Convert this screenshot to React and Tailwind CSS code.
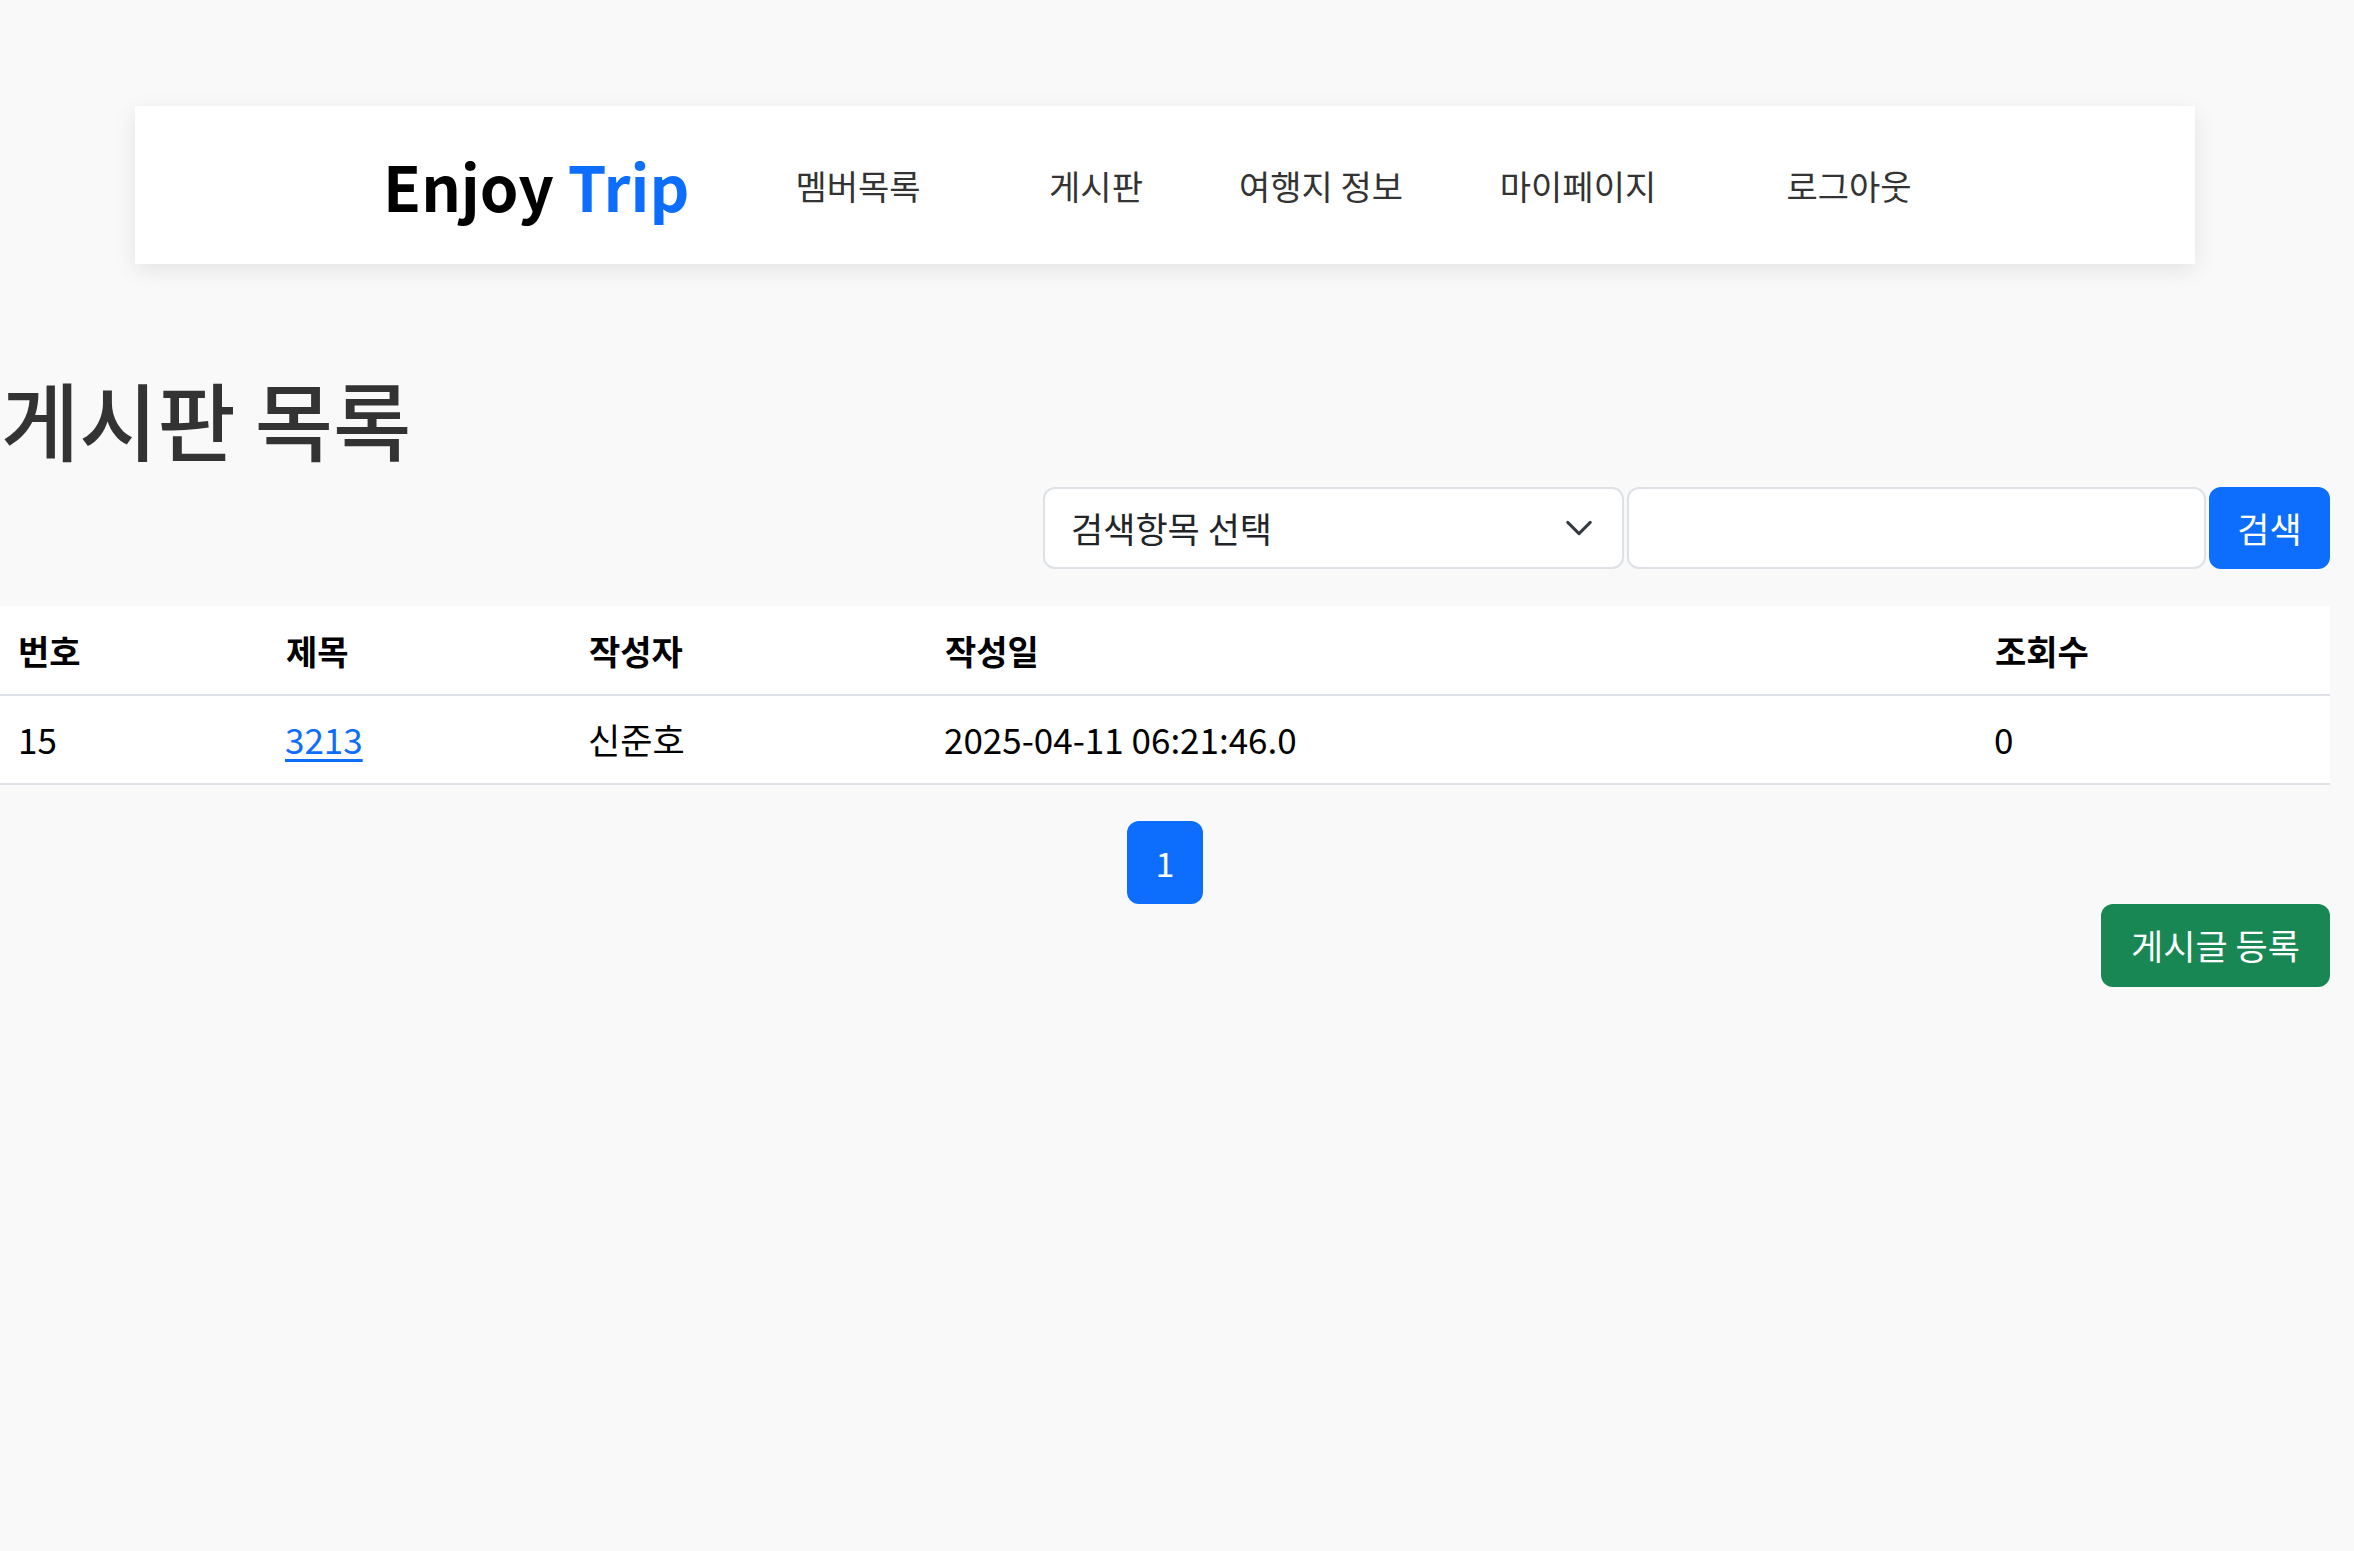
import React from 'react';

const navItems = [
    { label: '멤버목록', w: 'w-[344px]' },
    { label: '게시판', w: 'w-[132px]' },
    { label: '여행지 정보', w: 'w-[318px]' },
    { label: '마이페이지', w: 'w-[196px]' },
    { label: '로그아웃', w: 'w-[346px]' },
];

const rows = [
    { no: 15, title: '3213', writer: '신준호', date: '2025-04-11 06:21:46.0', hit: 0 },
];

const Header = () => (
    <div className="px-[135px] pt-[106px]">
        <div className="flex h-[158px] items-center bg-white pl-[248px] shadow-[0_6px_22px_rgba(0,0,0,0.09)]">
            <a className="w-[303px] whitespace-nowrap text-[62px] font-bold leading-none text-black">
                Enjoy <span className="text-[#0d6efd]">Trip</span>
            </a>
            {navItems.map((item) => (
                <a
                    key={item.label}
                    className={`${item.w} flex justify-center whitespace-nowrap text-[34px] text-[#333]`}
                >
                    {item.label}
                </a>
            ))}
        </div>
    </div>
);

const SearchBar = () => (
    <div className="flex h-[82px] justify-end gap-[3px]">
        <div className="flex w-[581px] items-center justify-between rounded-[12px] border-2 border-[#dee2e6] bg-white pl-[26px] pr-[28px]">
            <span className="text-[35px] text-[#212529]">검색항목 선택</span>
            <svg className="h-[30px] w-[30px]" viewBox="0 0 16 16" fill="none">
                <path
                    d="M2 5l6 6 6-6"
                    stroke="#343a40"
                    strokeWidth="1.6"
                    strokeLinecap="round"
                    strokeLinejoin="round"
                />
            </svg>
        </div>
        <div className="w-[579px] rounded-[12px] border-2 border-[#dee2e6] bg-white" />
        <button className="flex w-[121px] items-center justify-center rounded-[12px] bg-[#0d6efd] text-[35px] text-white">
            검색
        </button>
    </div>
);

const BoardTable = () => (
    <table className="mt-[37px] w-full table-fixed border-collapse bg-white text-[35px] text-black">
        <colgroup>
            <col className="w-[268px]" />
            <col className="w-[303px]" />
            <col className="w-[356px]" />
            <col className="w-[1050px]" />
            <col className="w-[353px]" />
        </colgroup>
        <thead>
            <tr className="h-[89px] border-b-2 border-[#dee2e6]">
                {['번호', '제목', '작성자', '작성일', '조회수'].map((h) => (
                    <th key={h} className="px-[18px] text-left text-[34px] font-bold">
                        {h}
                    </th>
                ))}
            </tr>
        </thead>
        <tbody>
            {rows.map((row) => (
                <tr key={row.no} className="h-[89px] border-b-2 border-[#dee2e6]">
                    <td className="px-[18px]">{row.no}</td>
                    <td className="px-[17px]">
                        <a className="text-[#0d6efd] underline underline-offset-[5px]">{row.title}</a>
                    </td>
                    <td className="px-[17px]">{row.writer}</td>
                    <td className="px-[17px]">{row.date}</td>
                    <td className="px-[17px]">{row.hit}</td>
                </tr>
            ))}
        </tbody>
    </table>
);

export default function App() {
    return (
        <div className="min-h-screen bg-[#f9f9f9] font-['Noto_Sans_CJK_KR','Noto_Sans',sans-serif]">
            <div className="w-[2330px]">
                <Header />
                <h1 className="mt-[100px] h-[123px] whitespace-nowrap pl-[1px] text-[85px] font-medium leading-[107px] text-[#333]">
                    게시판 목록
                </h1>
                <SearchBar />
                <BoardTable />
                <div className="mt-[36px] flex justify-center">
                    <button className="flex h-[83px] w-[76px] items-center justify-center rounded-[12px] bg-[#0d6efd] text-[34px] text-white">
                        1
                    </button>
                </div>
                <div className="flex justify-end">
                    <button className="h-[83px] w-[229px] rounded-[12px] bg-[#198754] text-[35px] text-white">
                        게시글 등록
                    </button>
                </div>
            </div>
        </div>
    );
}
